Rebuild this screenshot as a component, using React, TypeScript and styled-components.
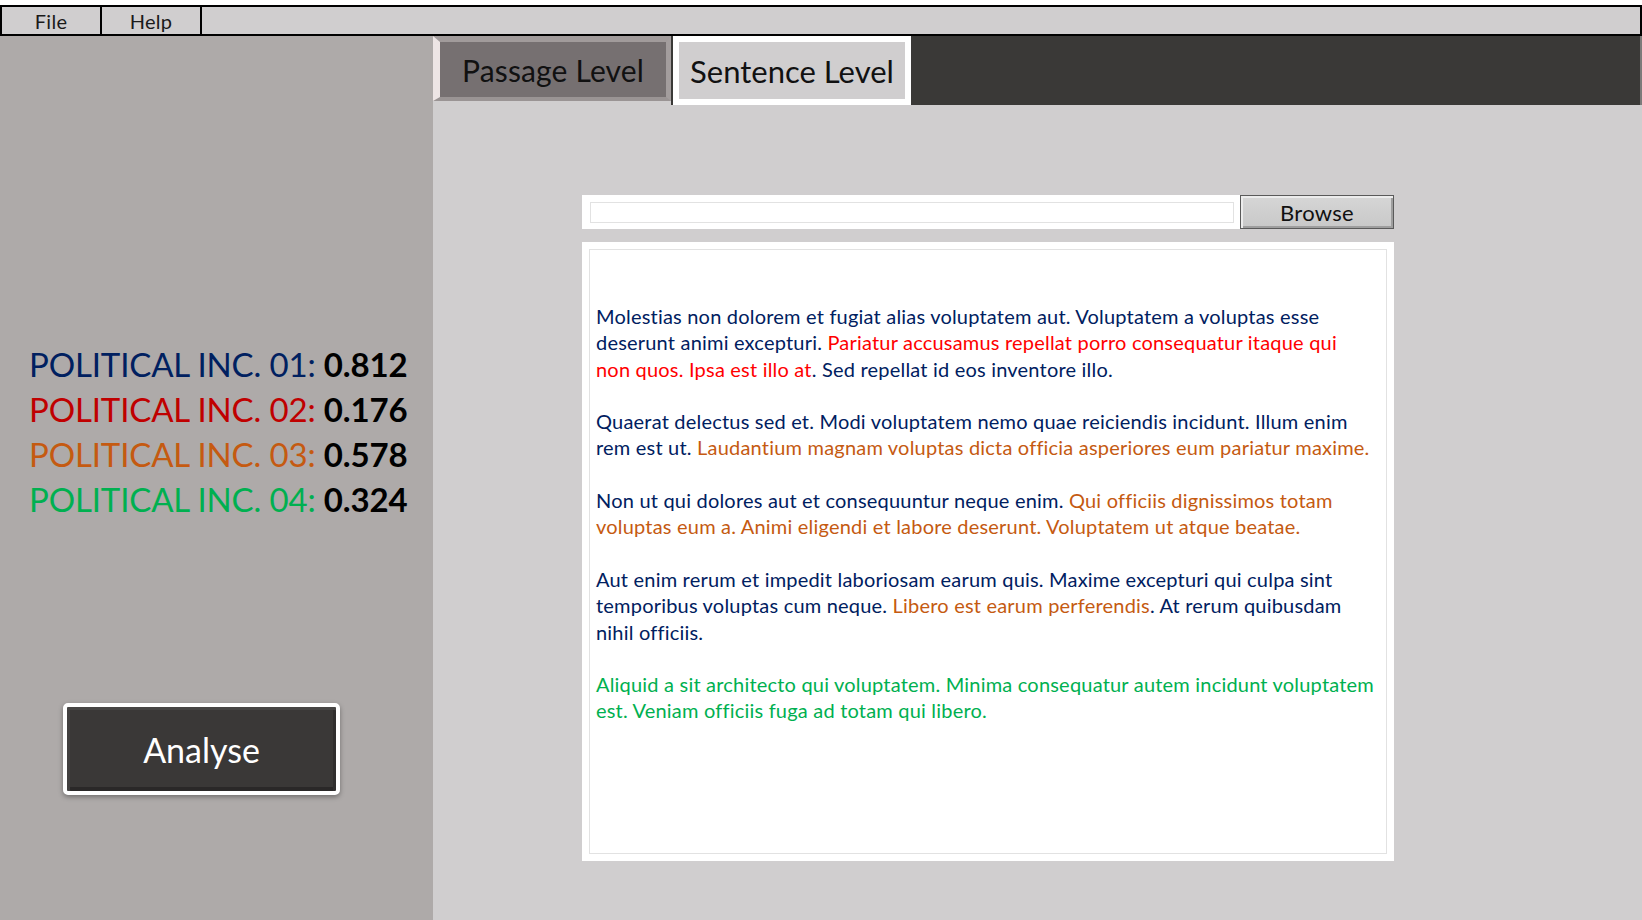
import React from 'react';
import styled, { createGlobalStyle } from 'styled-components';

const GlobalStyle = createGlobalStyle`
  html, body { margin: 0; padding: 0; background: #ffffff; }
  body { font-family: Lato, "Open Sans", sans-serif; }
  #root { width: 1642px; height: 920px; }
`;

const Page = styled.div`
  width: 1642px;
  height: 920px;
  padding-top: 5px;
  box-sizing: border-box;
  display: flex;
  flex-direction: column;
  overflow: hidden;
`;

const MenuBar = styled.div`
  display: flex;
  height: 31px;
  flex: none;
  box-sizing: border-box;
  border: 2px solid #000;
  background: #d0cecf;
`;

const MenuItem = styled.div`
  width: 98px;
  border-right: 2px solid #000;
  display: flex;
  align-items: center;
  justify-content: center;
  font-size: 20px;
  letter-spacing: 0.3px;
  color: #1a1a1a;
`;

const Body = styled.div`
  flex: 1;
  display: flex;
  min-height: 0;
`;

const Sidebar = styled.aside`
  width: 433px;
  flex: none;
  background: #aeaaa9;
  display: flex;
  flex-direction: column;
  align-items: flex-start;
  padding: 306px 0 0 29px;
  box-sizing: border-box;
`;

const ScoreList = styled.div`
  display: flex;
  flex-direction: column;
`;

const ScoreLine = styled.div<{ $color: string }>`
  font-size: 33px;
  line-height: 45px;
  height: 45px;
  color: ${(p) => p.$color};
  white-space: nowrap;
  letter-spacing: -0.15px;
`;

const ScoreValue = styled.span`
  color: #000;
  font-weight: 700;
`;

const AnalyseButton = styled.button`
  margin: 181px 0 0 34px;
  width: 277px;
  height: 92px;
  box-sizing: border-box;
  border: 4px solid #ffffff;
  border-radius: 5px;
  background: #3a3837;
  box-shadow: 0 2px 5px rgba(0, 0, 0, 0.35), inset 0 3px 0 #474544, inset 3px 0 0 #424040,
    inset -3px 0 0 #302e2e, inset 0 -4px 0 #2a2828;
  color: #ffffff;
  font-family: Lato, "Open Sans", sans-serif;
  font-size: 34px;
  padding: 0;
  cursor: pointer;
`;

const Main = styled.main`
  flex: 1;
  display: flex;
  flex-direction: column;
  background: #d0cecf;
  min-width: 0;
`;

const TabBar = styled.div`
  height: 69px;
  flex: none;
  display: flex;
  align-items: flex-start;
  gap: 2px;
  background: #3a3937;
  border-right: 2px solid #7c7a79;
`;

const Tab = styled.div<{ $active?: boolean }>`
  width: 238px;
  box-sizing: border-box;
  display: flex;
  align-items: center;
  justify-content: center;
  color: #111;
  ${(p) =>
    p.$active
      ? `
    height: 69px;
    border: 6px solid #ffffff;
    background: #d0cecf;
    font-size: 31px;
  `
      : `
    height: 65px;
    border-style: solid;
    border-width: 6px 5px 4px 7px;
    border-color: #a19b9b #a39d9d #9a9494 #ede5e5;
    background: #767071;
    box-shadow: 0 4px 0 #d0cecf;
    font-size: 30px;
    letter-spacing: 0.15px;
  `}
`;

const Content = styled.div`
  flex: 1;
  padding: 90px 0 0 149px;
`;

const Panel = styled.section`
  width: 812px;
  display: flex;
  flex-direction: column;
  gap: 13px;
`;

const BrowseRow = styled.div`
  height: 34px;
  display: flex;
  align-items: center;
  gap: 6px;
  background: #ffffff;
  padding-left: 8px;
`;

const PathInput = styled.input`
  width: 644px;
  height: 21px;
  box-sizing: border-box;
  border: 1px solid #e2e2e2;
  outline: none;
  background: #ffffff;
  padding: 0 4px;
`;

const BrowseButton = styled.button`
  flex: 1;
  height: 34px;
  box-sizing: border-box;
  border: 1px solid #5a5a5a;
  background: linear-gradient(#d6d6d6, #c8c8c8);
  box-shadow: inset 2px 2px 0 #ececec, inset -2px -2px 0 #9e9e9e;
  font-family: Lato, "Open Sans", sans-serif;
  font-size: 22px;
  letter-spacing: 0.3px;
  color: #111;
  padding: 0;
`;

const TextBox = styled.div`
  height: 619px;
  box-sizing: border-box;
  background: #ffffff;
  padding: 7px;
`;

const TextInner = styled.div`
  height: 100%;
  box-sizing: border-box;
  border: 1px solid #e2e2e2;
  padding: 53px 0 0 6px;
  font-size: 20px;
  letter-spacing: 0.2px;
  line-height: 26.3px;
  color: #002060;
  white-space: nowrap;
`;

const Para = styled.p`
  margin: 0 0 26.3px;
`;

const Hl = styled.span<{ $c: string }>`
  color: ${(p) => p.$c};
`;

const RED = '#ff0000';
const ORANGE = '#c55a11';
const GREEN = '#00b050';

const scores = [
  { label: 'POLITICAL INC. 01:', value: '0.812', color: '#002060' },
  { label: 'POLITICAL INC. 02:', value: '0.176', color: '#c00000' },
  { label: 'POLITICAL INC. 03:', value: '0.578', color: '#c55a11' },
  { label: 'POLITICAL INC. 04:', value: '0.324', color: '#00b050' },
];

export default function App() {
  return (
    <>
      <GlobalStyle />
      <Page>
        <MenuBar>
          <MenuItem>File</MenuItem>
          <MenuItem>Help</MenuItem>
        </MenuBar>
        <Body>
          <Sidebar>
            <ScoreList>
              {scores.map((s) => (
                <ScoreLine key={s.label} $color={s.color}>
                  {s.label} <ScoreValue>{s.value}</ScoreValue>
                </ScoreLine>
              ))}
            </ScoreList>
            <AnalyseButton>Analyse</AnalyseButton>
          </Sidebar>
          <Main>
            <TabBar>
              <Tab>Passage Level</Tab>
              <Tab $active>Sentence Level</Tab>
            </TabBar>
            <Content>
              <Panel>
                <BrowseRow>
                  <PathInput />
                  <BrowseButton>Browse</BrowseButton>
                </BrowseRow>
                <TextBox>
                  <TextInner>
                    <Para>
                      Molestias non dolorem et fugiat alias voluptatem aut. Voluptatem a voluptas esse
                      <br />
                      deserunt animi excepturi.{' '}
                      <Hl $c={RED}>Pariatur accusamus repellat porro consequatur itaque qui</Hl>
                      <br />
                      <Hl $c={RED}>non quos. Ipsa est illo at</Hl>. Sed repellat id eos inventore illo.
                    </Para>
                    <Para>
                      Quaerat delectus sed et. Modi voluptatem nemo quae reiciendis incidunt. Illum enim
                      <br />
                      rem est ut.{' '}
                      <Hl $c={ORANGE}>
                        Laudantium magnam voluptas dicta officia asperiores eum pariatur maxime.
                      </Hl>
                    </Para>
                    <Para>
                      Non ut qui dolores aut et consequuntur neque enim.{' '}
                      <Hl $c={ORANGE}>Qui officiis dignissimos totam</Hl>
                      <br />
                      <Hl $c={ORANGE}>
                        voluptas eum a. Animi eligendi et labore deserunt. Voluptatem ut atque beatae.
                      </Hl>
                    </Para>
                    <Para>
                      Aut enim rerum et impedit laboriosam earum quis. Maxime excepturi qui culpa sint
                      <br />
                      temporibus voluptas cum neque. <Hl $c={ORANGE}>Libero est earum perferendis</Hl>. At
                      rerum quibusdam
                      <br />
                      nihil officiis.
                    </Para>
                    <Para>
                      <Hl $c={GREEN}>
                        Aliquid a sit architecto qui voluptatem. Minima consequatur autem incidunt voluptatem
                        <br />
                        est. Veniam officiis fuga ad totam qui libero.
                      </Hl>
                    </Para>
                  </TextInner>
                </TextBox>
              </Panel>
            </Content>
          </Main>
        </Body>
      </Page>
    </>
  );
}
